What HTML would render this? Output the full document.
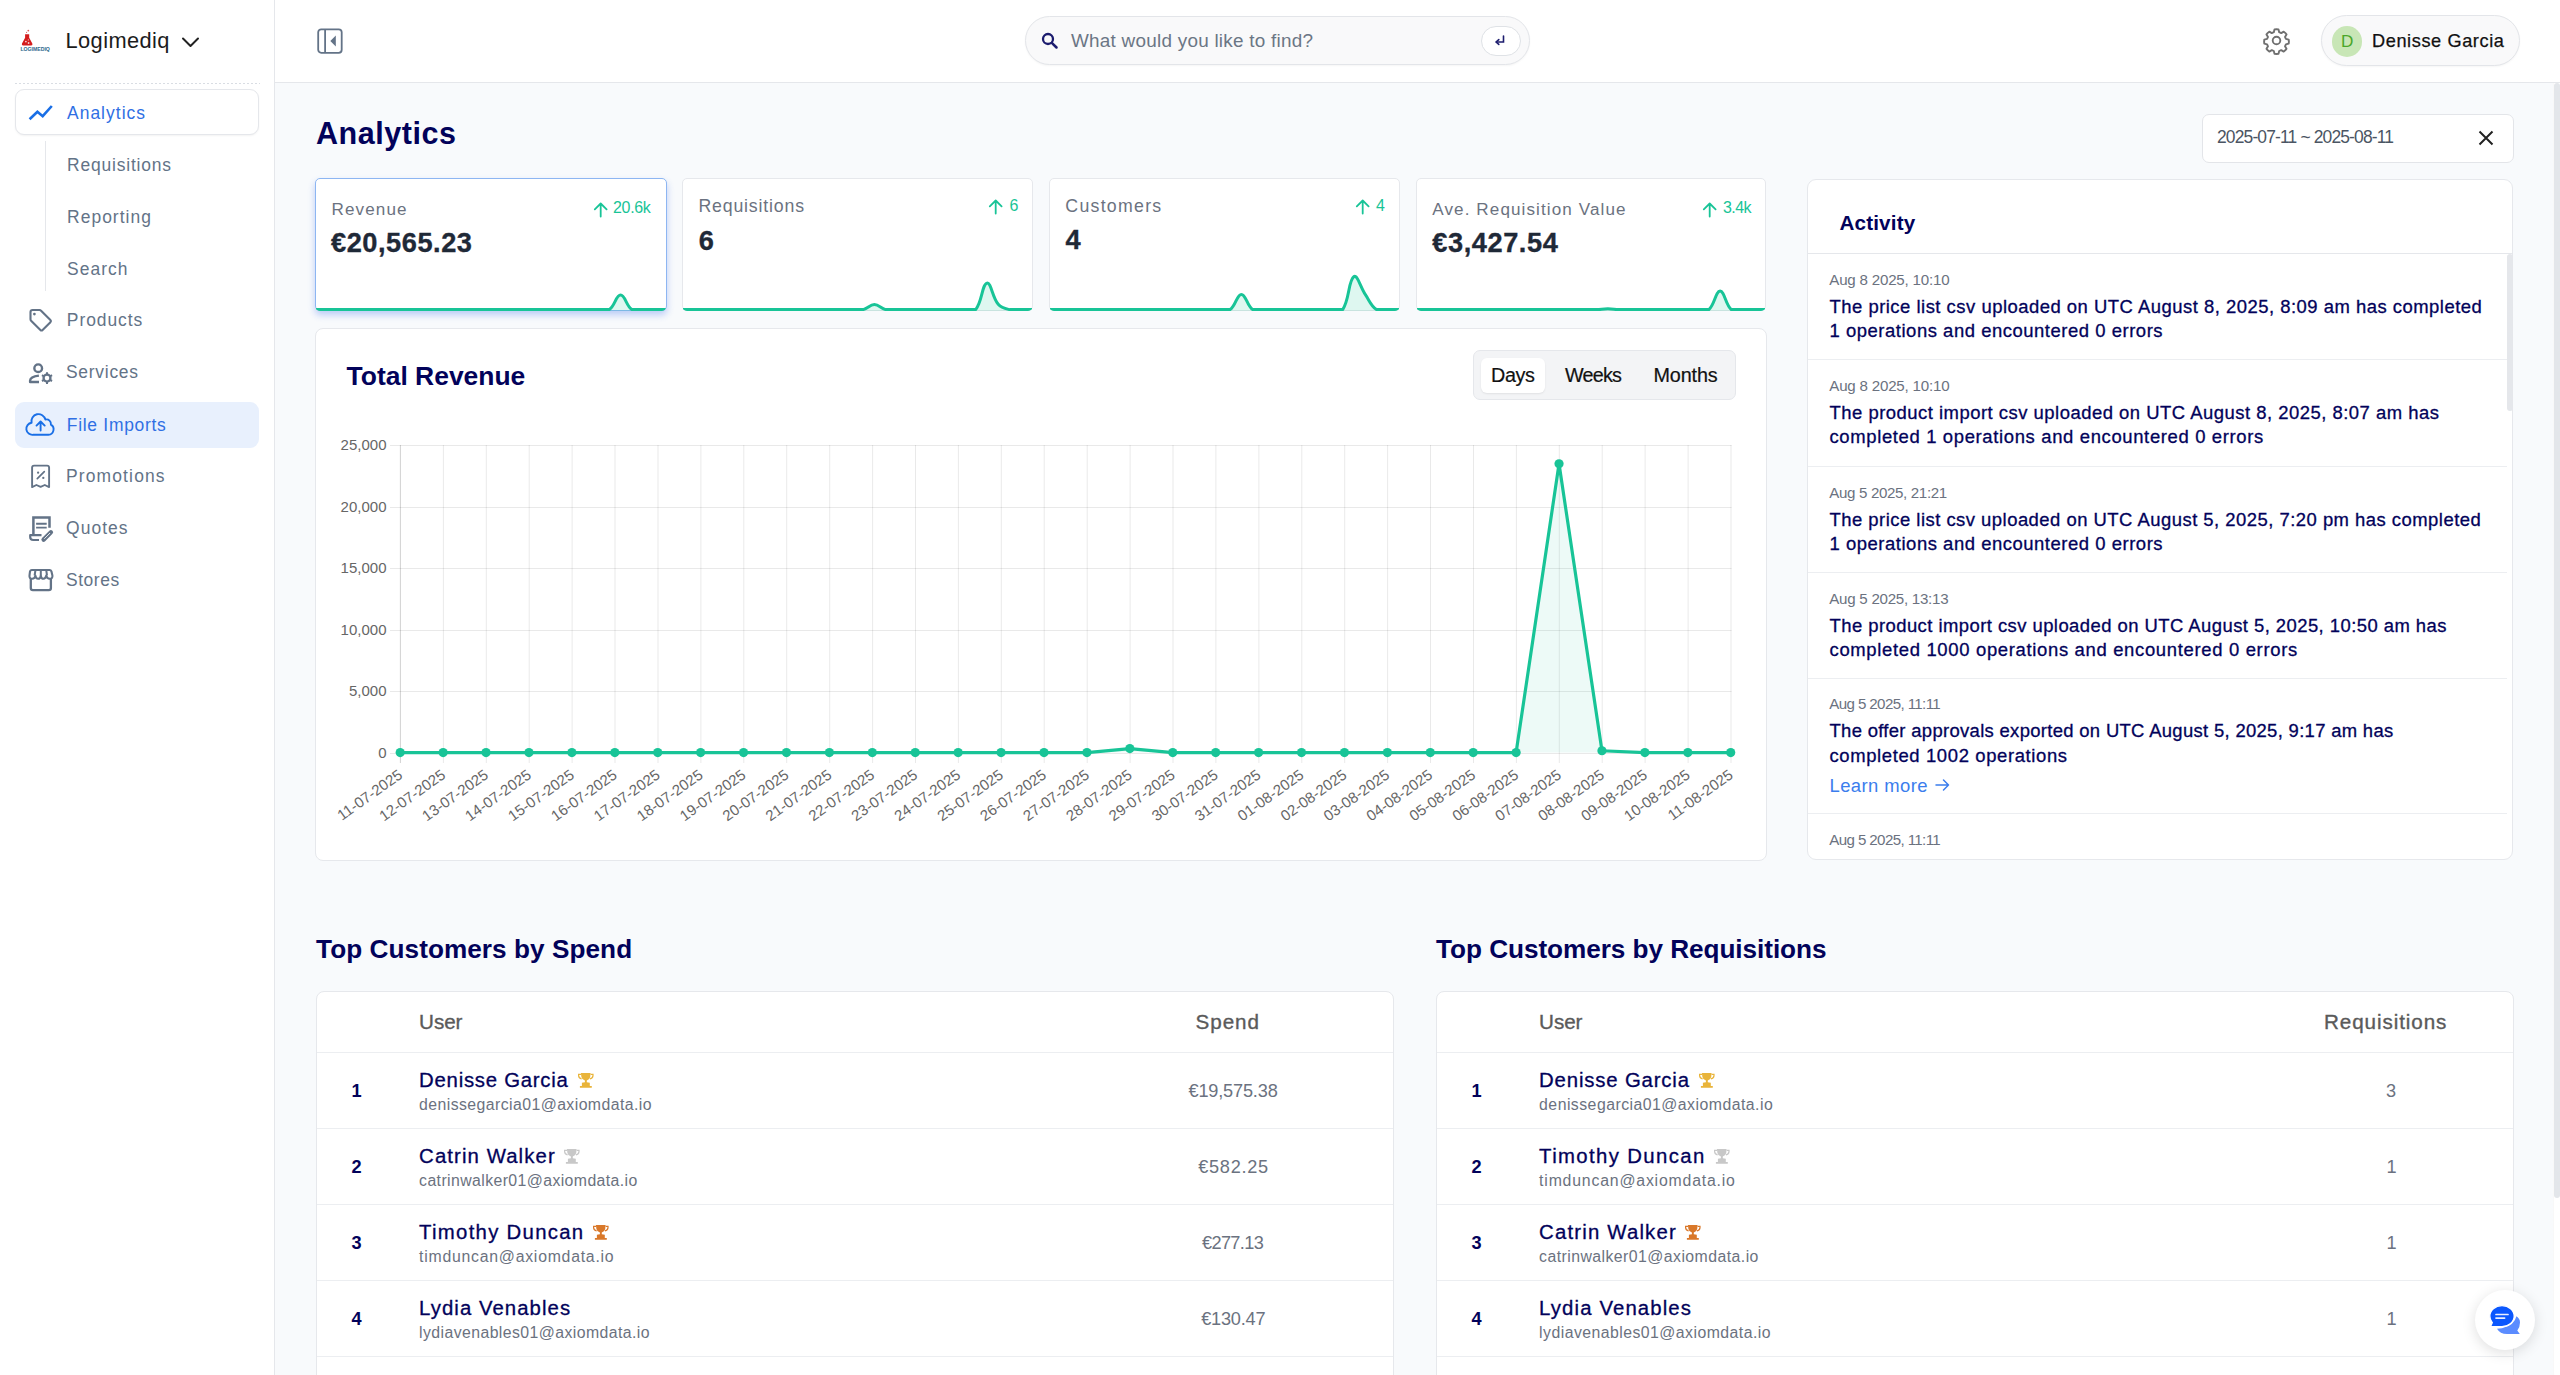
<!DOCTYPE html>
<html><head><meta charset="utf-8"><style>
html,body{margin:0;padding:0;width:2560px;height:1375px;overflow:hidden;background:#f8fafc;font-family:"Liberation Sans",sans-serif}
.t{position:absolute;white-space:nowrap}
svg text{font-family:"Liberation Sans",sans-serif}
</style></head><body>
<div style="position:absolute;left:0.00px;top:0.00px;width:2560.00px;height:1375.00px;background:#f8fafc"></div>
<div style="position:absolute;left:0.00px;top:0.00px;width:274.00px;height:1375.00px;background:#fff"></div>
<div style="position:absolute;left:274.00px;top:0.00px;width:1.00px;height:1375.00px;background:#e5e7eb"></div>
<svg style="position:absolute;left:0.00px;top:0.00px;" width="60" height="60" viewBox="0 0 60 60" fill="none">
<circle cx="28.3" cy="30.6" r="0.9" fill="#e06060"/><circle cx="26.6" cy="32.4" r="0.55" fill="#e06060"/>
<path d="M25.1 34.2 h4.1 v3.6 l3.1 5.6 q0.7 1.9 -1.1 2.1 h-8.1 q-1.8 -0.2 -1.1 -2.1 l3.1 -5.6z" fill="#d41c1c"/>
<circle cx="25.9" cy="41.6" r="0.9" fill="#fff" opacity="0.8"/><circle cx="28.6" cy="43" r="0.9" fill="#fff" opacity="0.8"/><circle cx="28.3" cy="39.9" r="0.6" fill="#fff" opacity="0.7"/>
<text x="20.4" y="50.8" font-family="Liberation Sans" font-weight="700" font-size="5.4" textLength="29.5" lengthAdjust="spacingAndGlyphs" fill="#2b678c">LOGIMEDIQ</text>
</svg>
<div class="t" style="left:65.50px;top:30.49px;font-size:21.80px;line-height:21.80px;letter-spacing:0.426px;color:#1c1c1c;">Logimediq</div>
<svg style="position:absolute;left:181.00px;top:36.00px;" width="19" height="12" viewBox="0 0 19 12" fill="none"><path d="M2 2.5 L9.5 10 L17 2.5" stroke="#222" stroke-width="2" stroke-linecap="round" stroke-linejoin="round"/></svg>
<div style="position:absolute;left:15.00px;top:82.50px;width:245.00px;height:1.00px;background-image:linear-gradient(90deg,#d9dde3 50%,transparent 50%);background-size:4px 1px"></div>
<div style="position:absolute;left:15.00px;top:89.00px;width:244.00px;height:46.00px;background:#fff;border:1px solid #e5e7eb;border-radius:9px;box-sizing:border-box;box-shadow:0 1px 2px rgba(0,0,0,0.05)"></div>
<div class="t" style="left:67.00px;top:105.13px;font-size:17.44px;line-height:17.44px;letter-spacing:1.027px;color:#2f6fe4;">Analytics</div>
<div style="position:absolute;left:45.00px;top:141.00px;width:1.00px;height:150.00px;background:#e5e7eb"></div>
<div class="t" style="left:67.00px;top:157.13px;font-size:17.44px;line-height:17.44px;letter-spacing:0.818px;color:#637387;">Requisitions</div>
<div class="t" style="left:67.00px;top:208.53px;font-size:17.44px;line-height:17.44px;letter-spacing:1.047px;color:#637387;">Reporting</div>
<div class="t" style="left:67.00px;top:260.53px;font-size:17.44px;line-height:17.44px;letter-spacing:1.049px;color:#637387;">Search</div>
<div style="position:absolute;left:15.00px;top:402.00px;width:244.00px;height:46.00px;background:#e8f0fd;border-radius:9px"></div>
<div class="t" style="left:66.80px;top:311.73px;font-size:17.44px;line-height:17.44px;letter-spacing:0.953px;color:#637387;">Products</div>
<div class="t" style="left:66.00px;top:363.93px;font-size:17.44px;line-height:17.44px;letter-spacing:0.730px;color:#637387;">Services</div>
<div class="t" style="left:66.80px;top:416.83px;font-size:17.44px;line-height:17.44px;letter-spacing:0.718px;color:#2f6fe4;">File Imports</div>
<div class="t" style="left:66.00px;top:468.33px;font-size:17.44px;line-height:17.44px;letter-spacing:1.153px;color:#637387;">Promotions</div>
<div class="t" style="left:66.00px;top:520.43px;font-size:17.44px;line-height:17.44px;letter-spacing:1.073px;color:#637387;">Quotes</div>
<div class="t" style="left:66.00px;top:572.23px;font-size:17.44px;line-height:17.44px;letter-spacing:0.559px;color:#637387;">Stores</div>
<svg style="position:absolute;left:0;top:0" width="275" height="620" viewBox="0 0 275 620" fill="none"><path d="M29.6 119.3 L37.4 111.7 L42.7 116.2 L51.8 106" stroke="#1a6fe6" stroke-width="2.6" stroke-linecap="butt" stroke-linejoin="miter"/><path d="M32.6 310 H39.5 q0.9 0 1.6 0.7 L50.4 320 q1.1 1.1 0 2.2 L42.6 330 q-1.1 1.1 -2.2 0 L31.1 320.7 q-0.6 -0.6 -0.6 -1.5 V312.1 q0 -2.1 2.1 -2.1z" stroke="#637387" stroke-width="2.1" stroke-linejoin="round"/><circle cx="34.4" cy="314.1" r="1.35" fill="#637387"/><circle cx="38.2" cy="368.2" r="3.85" stroke="#637387" stroke-width="2.4"/><path d="M38.9 375.6 Q30.4 376.6 30.1 380.5 V382 H39" stroke="#637387" stroke-width="2.4" stroke-linejoin="round"/><path d="M49.30 374.12 L48.00 373.61 L48.03 372.29 L45.97 372.29 L46.00 373.61 L44.70 374.12 L43.61 374.99 L42.49 374.30 L41.45 376.09 L42.61 376.72 L42.40 378.10 L42.61 379.48 L41.45 380.11 L42.49 381.90 L43.61 381.21 L44.70 382.08 L46.00 382.59 L45.97 383.91 L48.03 383.91 L48.00 382.59 L49.30 382.08 L50.39 381.21 L51.51 381.90 L52.55 380.11 L51.39 379.48 L51.60 378.10 L51.39 376.72 L52.55 376.09 L51.51 374.30 L50.39 374.99Z M44.70 378.10 a2.30 2.30 0 1 0 4.60 0 a2.30 2.30 0 1 0 -4.60 0Z" fill="#637387" fill-rule="evenodd"/><path d="M33.2 434.8 H48.4 A5.5 5.5 0 0 0 50.9 424.6 A4.4 4.4 0 0 0 45.4 419.6 A7 7 0 0 0 31.6 422.8 A6 6 0 0 0 33.2 434.8z" stroke="#1a6fe6" stroke-width="1.9" stroke-linejoin="round"/><path d="M40.6 430.6 V421.6 M36.5 425.6 L40.6 421.5 L44.7 425.6" stroke="#1a6fe6" stroke-width="1.9" stroke-linecap="round" stroke-linejoin="round"/><path d="M32.1 487.1 V467.6 q0 -2 2 -2 H47.1 q2 0 2 2 V487.1 L44.8 485 L40.6 486.8 L36.4 485z" stroke="#637387" stroke-width="1.9" stroke-linejoin="round"/><path d="M37.3 478.6 L44.3 471.7" stroke="#637387" stroke-width="1.7" stroke-linecap="round"/><circle cx="38.1" cy="472.7" r="1.15" fill="#637387"/><circle cx="43.3" cy="477.9" r="1.15" fill="#637387"/><path d="M33.4 535 V517.6 H49.5 V527.8" stroke="#637387" stroke-width="2.5"/><path d="M36.1 523.7 H46.7 M36.1 527.6 H46.7" stroke="#637387" stroke-width="1.9"/><path d="M41.5 535.2 H30.2 V537 q0 3 3 3 H39" stroke="#637387" stroke-width="2.2" stroke-linejoin="round"/><path d="M43.6 539.6 L50.9 532.3" stroke="#637387" stroke-width="4.4" stroke-linecap="round"/><path d="M44.6 538.5 L49.8 533.3" stroke="#fff" stroke-width="0.9" stroke-linecap="round"/><path d="M42.2 540.6 V537.5 L45.3 540.6z" fill="#637387"/><path d="M30.8 578 V588 q0 2.1 2.1 2.1 H48.8 q2.1 0 2.1 -2.1 V578" stroke="#637387" stroke-width="2.3"/><path d="M31.8 570 H49.6 q1.3 0 1.8 1.3 L52.4 575.5 q0.4 2.9 -2.6 3.3 q-2.8 0 -3.5 -3.2 q-0.8 3.2 -2.8 3.2 q-2.4 0 -2.7 -3.2 q-0.3 3.2 -2.7 3.2 q-2.2 0 -2.7 -3.2 q-0.6 3.2 -3.3 3.2 q-3 -0.4 -2.6 -3.3 L30 571.3 q0.5 -1.3 1.8 -1.3z" stroke="#637387" stroke-width="2.1" stroke-linejoin="round"/><path d="M35.4 570.5 L34.6 575.5 M40.8 570.5 V575.5 M46.3 570.5 L47 575.5" stroke="#637387" stroke-width="2"/></svg>
<div style="position:absolute;left:275.00px;top:0.00px;width:2285.00px;height:82.00px;background:#fff"></div>
<div style="position:absolute;left:275.00px;top:82.00px;width:2285.00px;height:1.00px;background:#e5e7eb"></div>
<svg style="position:absolute;left:316.00px;top:27.00px;" width="28" height="28" viewBox="0 0 28 28" fill="none"><rect x="2.2" y="2.3" width="23.5" height="23.5" rx="3" stroke="#637387" stroke-width="1.8"/><path d="M9.1 2.5 v23" stroke="#637387" stroke-width="1.8"/><path d="M19.8 8.5 v11 l-5.5 -5.5z" fill="#637387"/></svg>
<div style="position:absolute;left:1025.00px;top:16.00px;width:505.00px;height:49.00px;background:#f9f9fa;border:1px solid #e3e5e9;border-radius:25px;box-sizing:border-box;box-shadow:0 1px 2px rgba(0,0,0,0.04)"></div>
<svg style="position:absolute;left:1040.00px;top:31.00px;" width="20" height="20" viewBox="0 0 20 20" fill="none"><circle cx="8" cy="8" r="5" stroke="#1c1c6e" stroke-width="2.3"/><path d="M11.8 11.8 L16.5 16.5" stroke="#1c1c6e" stroke-width="2.5" stroke-linecap="round"/></svg>
<div class="t" style="left:1071.00px;top:31.70px;font-size:18.90px;line-height:18.90px;letter-spacing:0.249px;color:#6b7685;">What would you like to find?</div>
<div style="position:absolute;left:1481.00px;top:26.00px;width:40.00px;height:30.00px;background:#fff;border:1px solid #dfe2e6;border-radius:15px;box-sizing:border-box"></div>
<svg style="position:absolute;left:1490.00px;top:32.00px;" width="20" height="18" viewBox="0 0 20 18" fill="none"><path d="M13.5 4 v6 h-7" stroke="#1c1c6e" stroke-width="1.6" stroke-linecap="round"/><path d="M8.8 7.6 L6 10 L8.8 12.4" stroke="#1c1c6e" stroke-width="1.6" stroke-linecap="round" stroke-linejoin="round"/></svg>
<svg style="position:absolute;left:2262.00px;top:26.00px;" width="29" height="29" viewBox="0 0 29 29" fill="none"><path d="M14.5 3.2 l2 0.2 l0.7 2.8 l2 0.9 l2.5 -1.5 l1.5 1.3 l1.3 1.5 l-1.5 2.5 l0.9 2 l2.8 0.7 l0.2 2 l-0.2 2 l-2.8 0.7 l-0.9 2 l1.5 2.5 l-1.3 1.5 l-1.5 1.3 l-2.5 -1.5 l-2 0.9 l-0.7 2.8 l-2 0.2 l-2 -0.2 l-0.7 -2.8 l-2 -0.9 l-2.5 1.5 l-1.5 -1.3 l-1.3 -1.5 l1.5 -2.5 l-0.9 -2 l-2.8 -0.7 l-0.2 -2 l0.2 -2 l2.8 -0.7 l0.9 -2 l-1.5 -2.5 l1.3 -1.5 l1.5 -1.3 l2.5 1.5 l2 -0.9 l0.7 -2.8z" stroke="#707070" stroke-width="1.9" stroke-linejoin="round"/><circle cx="14.5" cy="14.5" r="3.8" stroke="#707070" stroke-width="1.9"/></svg>
<div style="position:absolute;left:2321.00px;top:15.00px;width:199.00px;height:51.00px;background:#f9f9fa;border:1px solid #e3e5e9;border-radius:26px;box-sizing:border-box;box-shadow:0 1px 2px rgba(0,0,0,0.04)"></div>
<div style="position:absolute;left:2331.50px;top:26.00px;width:30.50px;height:30.50px;background:#c8e6b6;border-radius:50%"></div>
<div class="t" style="left:2341.00px;top:32.98px;font-size:17.15px;line-height:17.15px;letter-spacing:0.000px;color:#4aa62a;">D</div>
<div class="t" style="left:2372.00px;top:32.32px;font-size:18.17px;line-height:18.17px;letter-spacing:0.599px;color:#111;-webkit-text-stroke:0.25px #111;">Denisse Garcia</div>
<div class="t" style="left:316.00px;top:117.76px;font-size:30.52px;line-height:30.52px;letter-spacing:0.537px;color:#02025a;font-weight:700;">Analytics</div>
<div style="position:absolute;left:2201.50px;top:113.50px;width:312.00px;height:49.00px;background:#fff;border:1px solid #e3e5e9;border-radius:7px;box-sizing:border-box"></div>
<div class="t" style="left:2217.00px;top:129.43px;font-size:17.44px;line-height:17.44px;letter-spacing:-0.851px;color:#4b5563;">2025-07-11 ~ 2025-08-11</div>
<svg style="position:absolute;left:2476.00px;top:128.00px;" width="20" height="20" viewBox="0 0 20 20" fill="none"><path d="M3.5 3.5 L16.5 16.5 M16.5 3.5 L3.5 16.5" stroke="#222" stroke-width="2"/></svg>
<div style="position:absolute;left:315.00px;top:178.00px;width:351.70px;height:133.00px;background:#fff;border:1px solid #8db6f2;border-radius:5px;box-sizing:border-box;box-shadow:0 4px 7px rgba(60,110,235,0.32)"></div>
<div class="t" style="left:331.50px;top:200.99px;font-size:17.08px;line-height:17.08px;letter-spacing:1.106px;color:#6b7280;">Revenue</div>
<svg style="position:absolute;left:592.50px;top:201.00px;" width="16" height="17" viewBox="0 0 16 17" fill="none"><path d="M7.7 15.5 V2.5 M1.8 8.4 L7.7 2.5 L13.6 8.4" stroke="#18c497" stroke-width="1.8" stroke-linecap="round" stroke-linejoin="round"/></svg>
<div class="t" style="left:613.00px;top:200.41px;font-size:15.99px;line-height:15.99px;letter-spacing:-0.310px;color:#18c497;">20.6k</div>
<div class="t" style="left:331.00px;top:228.79px;font-size:27.18px;line-height:27.18px;letter-spacing:0.551px;color:#1f2937;font-weight:700;-webkit-text-stroke:0.35px #1f2937;">€20,565.23</div>
<svg style="position:absolute;left:315.00px;top:178.00px;" width="351.7" height="133" viewBox="0 0 351.7 133" fill="none"><defs><clipPath id="c315"><rect x="0" y="0" width="351.7" height="133" rx="5"/></clipPath></defs><g clip-path="url(#c315)"><path d="M1.00 131.60 C5.51 131.60 7.77 131.60 12.28 131.60 C16.79 131.60 19.05 131.60 23.56 131.60 C28.07 131.60 30.33 131.60 34.84 131.60 C39.35 131.60 41.61 131.60 46.12 131.60 C50.63 131.60 52.89 131.60 57.40 131.60 C61.92 131.60 64.17 131.60 68.68 131.60 C73.20 131.60 75.45 131.60 79.96 131.60 C84.48 131.60 86.73 131.60 91.25 131.60 C95.76 131.60 98.01 131.60 102.53 131.60 C107.04 131.60 109.29 131.60 113.81 131.60 C118.32 131.60 120.57 131.60 125.09 131.60 C129.60 131.60 131.86 131.60 136.37 131.60 C140.88 131.60 143.14 131.60 147.65 131.60 C152.16 131.60 154.42 131.60 158.93 131.60 C163.44 131.60 165.70 131.60 170.21 131.60 C174.72 131.60 176.98 131.60 181.49 131.60 C186.00 131.60 188.26 131.60 192.77 131.60 C197.28 131.60 199.54 131.60 204.05 131.60 C208.56 131.60 210.82 131.60 215.33 131.60 C219.84 131.60 222.10 131.60 226.61 131.60 C231.13 131.60 233.38 131.60 237.89 131.60 C242.41 131.60 244.66 131.60 249.17 131.60 C253.69 131.60 255.94 131.60 260.45 131.60 C264.97 131.60 267.22 131.60 271.74 131.60 C276.25 131.60 278.50 131.60 283.02 131.60 C287.53 131.60 290.86 131.60 294.30 131.60 C299.89 128.01 301.07 117.10 305.58 117.10 C310.09 117.10 311.27 128.01 316.86 131.60 C320.29 131.60 323.63 131.60 328.14 131.60 C332.65 131.60 334.91 131.60 339.42 131.60 C343.93 131.60 346.19 131.60 350.70 131.60 L350.70 140 L1 140 Z" fill="rgba(24,196,151,0.14)"/><path d="M1.00 131.60 C5.51 131.60 7.77 131.60 12.28 131.60 C16.79 131.60 19.05 131.60 23.56 131.60 C28.07 131.60 30.33 131.60 34.84 131.60 C39.35 131.60 41.61 131.60 46.12 131.60 C50.63 131.60 52.89 131.60 57.40 131.60 C61.92 131.60 64.17 131.60 68.68 131.60 C73.20 131.60 75.45 131.60 79.96 131.60 C84.48 131.60 86.73 131.60 91.25 131.60 C95.76 131.60 98.01 131.60 102.53 131.60 C107.04 131.60 109.29 131.60 113.81 131.60 C118.32 131.60 120.57 131.60 125.09 131.60 C129.60 131.60 131.86 131.60 136.37 131.60 C140.88 131.60 143.14 131.60 147.65 131.60 C152.16 131.60 154.42 131.60 158.93 131.60 C163.44 131.60 165.70 131.60 170.21 131.60 C174.72 131.60 176.98 131.60 181.49 131.60 C186.00 131.60 188.26 131.60 192.77 131.60 C197.28 131.60 199.54 131.60 204.05 131.60 C208.56 131.60 210.82 131.60 215.33 131.60 C219.84 131.60 222.10 131.60 226.61 131.60 C231.13 131.60 233.38 131.60 237.89 131.60 C242.41 131.60 244.66 131.60 249.17 131.60 C253.69 131.60 255.94 131.60 260.45 131.60 C264.97 131.60 267.22 131.60 271.74 131.60 C276.25 131.60 278.50 131.60 283.02 131.60 C287.53 131.60 290.86 131.60 294.30 131.60 C299.89 128.01 301.07 117.10 305.58 117.10 C310.09 117.10 311.27 128.01 316.86 131.60 C320.29 131.60 323.63 131.60 328.14 131.60 C332.65 131.60 334.91 131.60 339.42 131.60 C343.93 131.60 346.19 131.60 350.70 131.60" stroke="#18c497" stroke-width="3" stroke-linejoin="round"/></g></svg>
<div style="position:absolute;left:682.40px;top:178.00px;width:351.00px;height:133.00px;background:#fff;border:1px solid #e6e8ec;border-radius:5px;box-sizing:border-box"></div>
<div class="t" style="left:698.40px;top:197.99px;font-size:17.73px;line-height:17.73px;letter-spacing:0.837px;color:#6b7280;">Requisitions</div>
<svg style="position:absolute;left:987.90px;top:198.10px;" width="16" height="17" viewBox="0 0 16 17" fill="none"><path d="M7.7 15.5 V2.5 M1.8 8.4 L7.7 2.5 L13.6 8.4" stroke="#18c497" stroke-width="1.8" stroke-linecap="round" stroke-linejoin="round"/></svg>
<div class="t" style="left:1009.40px;top:197.96px;font-size:15.99px;line-height:15.99px;letter-spacing:0.000px;color:#18c497;">6</div>
<div class="t" style="left:698.70px;top:226.79px;font-size:27.18px;line-height:27.18px;letter-spacing:0.000px;color:#1f2937;font-weight:700;-webkit-text-stroke:0.35px #1f2937;">6</div>
<svg style="position:absolute;left:682.40px;top:178.00px;" width="351" height="133" viewBox="0 0 351 133" fill="none"><defs><clipPath id="c682"><rect x="0" y="0" width="351" height="133" rx="5"/></clipPath></defs><g clip-path="url(#c682)"><path d="M1.00 131.60 C5.50 131.60 7.75 131.60 12.26 131.60 C16.76 131.60 19.01 131.60 23.52 131.60 C28.02 131.60 30.27 131.60 34.77 131.60 C39.28 131.60 41.53 131.60 46.03 131.60 C50.54 131.60 52.79 131.60 57.29 131.60 C61.79 131.60 64.05 131.60 68.55 131.60 C73.05 131.60 75.30 131.60 79.81 131.60 C84.31 131.60 86.56 131.60 91.06 131.60 C95.57 131.60 97.82 131.60 102.32 131.60 C106.83 131.60 109.08 131.60 113.58 131.60 C118.08 131.60 120.34 131.60 124.84 131.60 C129.34 131.60 131.59 131.60 136.10 131.60 C140.60 131.60 142.85 131.60 147.35 131.60 C151.86 131.60 154.11 131.60 158.61 131.60 C163.12 131.60 165.37 131.60 169.87 131.60 C174.37 131.60 176.83 131.60 181.13 131.60 C185.83 130.56 187.88 126.60 192.39 126.60 C196.89 126.60 198.94 130.56 203.65 131.60 C207.95 131.60 210.40 131.60 214.90 131.60 C219.41 131.60 221.66 131.60 226.16 131.60 C230.66 131.60 232.92 131.60 237.42 131.60 C241.92 131.60 244.17 131.60 248.68 131.60 C253.18 131.60 255.43 131.60 259.94 131.60 C264.44 131.60 266.69 131.60 271.19 131.60 C275.70 131.60 277.95 131.60 282.45 131.60 C286.95 131.60 291.18 131.60 293.71 131.60 C300.18 123.98 300.06 106.26 304.97 105.10 C309.06 104.14 310.29 119.32 316.23 126.30 C319.30 129.92 322.76 130.49 327.48 131.60 C331.76 131.60 334.24 131.60 338.74 131.60 C343.25 131.60 345.50 131.60 350.00 131.60 L350.00 140 L1 140 Z" fill="rgba(24,196,151,0.14)"/><path d="M1.00 131.60 C5.50 131.60 7.75 131.60 12.26 131.60 C16.76 131.60 19.01 131.60 23.52 131.60 C28.02 131.60 30.27 131.60 34.77 131.60 C39.28 131.60 41.53 131.60 46.03 131.60 C50.54 131.60 52.79 131.60 57.29 131.60 C61.79 131.60 64.05 131.60 68.55 131.60 C73.05 131.60 75.30 131.60 79.81 131.60 C84.31 131.60 86.56 131.60 91.06 131.60 C95.57 131.60 97.82 131.60 102.32 131.60 C106.83 131.60 109.08 131.60 113.58 131.60 C118.08 131.60 120.34 131.60 124.84 131.60 C129.34 131.60 131.59 131.60 136.10 131.60 C140.60 131.60 142.85 131.60 147.35 131.60 C151.86 131.60 154.11 131.60 158.61 131.60 C163.12 131.60 165.37 131.60 169.87 131.60 C174.37 131.60 176.83 131.60 181.13 131.60 C185.83 130.56 187.88 126.60 192.39 126.60 C196.89 126.60 198.94 130.56 203.65 131.60 C207.95 131.60 210.40 131.60 214.90 131.60 C219.41 131.60 221.66 131.60 226.16 131.60 C230.66 131.60 232.92 131.60 237.42 131.60 C241.92 131.60 244.17 131.60 248.68 131.60 C253.18 131.60 255.43 131.60 259.94 131.60 C264.44 131.60 266.69 131.60 271.19 131.60 C275.70 131.60 277.95 131.60 282.45 131.60 C286.95 131.60 291.18 131.60 293.71 131.60 C300.18 123.98 300.06 106.26 304.97 105.10 C309.06 104.14 310.29 119.32 316.23 126.30 C319.30 129.92 322.76 130.49 327.48 131.60 C331.76 131.60 334.24 131.60 338.74 131.60 C343.25 131.60 345.50 131.60 350.00 131.60" stroke="#18c497" stroke-width="3" stroke-linejoin="round"/></g></svg>
<div style="position:absolute;left:1049.30px;top:178.00px;width:351.00px;height:133.00px;background:#fff;border:1px solid #e6e8ec;border-radius:5px;box-sizing:border-box"></div>
<div class="t" style="left:1065.30px;top:198.09px;font-size:17.73px;line-height:17.73px;letter-spacing:1.283px;color:#6b7280;">Customers</div>
<svg style="position:absolute;left:1355.20px;top:198.20px;" width="16" height="17" viewBox="0 0 16 17" fill="none"><path d="M7.7 15.5 V2.5 M1.8 8.4 L7.7 2.5 L13.6 8.4" stroke="#18c497" stroke-width="1.8" stroke-linecap="round" stroke-linejoin="round"/></svg>
<div class="t" style="left:1375.90px;top:198.06px;font-size:15.99px;line-height:15.99px;letter-spacing:0.000px;color:#18c497;">4</div>
<div class="t" style="left:1065.60px;top:226.49px;font-size:27.18px;line-height:27.18px;letter-spacing:0.000px;color:#1f2937;font-weight:700;-webkit-text-stroke:0.35px #1f2937;">4</div>
<svg style="position:absolute;left:1049.30px;top:178.00px;" width="351" height="133" viewBox="0 0 351 133" fill="none"><defs><clipPath id="c1049"><rect x="0" y="0" width="351" height="133" rx="5"/></clipPath></defs><g clip-path="url(#c1049)"><path d="M1.00 131.60 C5.50 131.60 7.75 131.60 12.26 131.60 C16.76 131.60 19.01 131.60 23.52 131.60 C28.02 131.60 30.27 131.60 34.77 131.60 C39.28 131.60 41.53 131.60 46.03 131.60 C50.54 131.60 52.79 131.60 57.29 131.60 C61.79 131.60 64.05 131.60 68.55 131.60 C73.05 131.60 75.30 131.60 79.81 131.60 C84.31 131.60 86.56 131.60 91.06 131.60 C95.57 131.60 97.82 131.60 102.32 131.60 C106.83 131.60 109.08 131.60 113.58 131.60 C118.08 131.60 120.34 131.60 124.84 131.60 C129.34 131.60 131.59 131.60 136.10 131.60 C140.60 131.60 142.85 131.60 147.35 131.60 C151.86 131.60 154.11 131.60 158.61 131.60 C163.12 131.60 165.37 131.60 169.87 131.60 C174.37 131.60 177.77 131.60 181.13 131.60 C186.78 127.79 187.88 116.40 192.39 116.40 C196.89 116.40 198.00 127.79 203.65 131.60 C207.01 131.60 210.40 131.60 214.90 131.60 C219.41 131.60 221.66 131.60 226.16 131.60 C230.66 131.60 232.92 131.60 237.42 131.60 C241.92 131.60 244.17 131.60 248.68 131.60 C253.18 131.60 255.43 131.60 259.94 131.60 C264.44 131.60 266.69 131.60 271.19 131.60 C275.70 131.60 277.95 131.60 282.45 131.60 C286.95 131.60 291.51 131.60 293.71 131.60 C300.52 121.62 299.35 102.39 304.97 98.60 C308.36 96.31 311.48 109.45 316.23 116.40 C320.49 122.65 321.84 127.79 327.48 131.60 C330.84 131.60 334.24 131.60 338.74 131.60 C343.25 131.60 345.50 131.60 350.00 131.60 L350.00 140 L1 140 Z" fill="rgba(24,196,151,0.14)"/><path d="M1.00 131.60 C5.50 131.60 7.75 131.60 12.26 131.60 C16.76 131.60 19.01 131.60 23.52 131.60 C28.02 131.60 30.27 131.60 34.77 131.60 C39.28 131.60 41.53 131.60 46.03 131.60 C50.54 131.60 52.79 131.60 57.29 131.60 C61.79 131.60 64.05 131.60 68.55 131.60 C73.05 131.60 75.30 131.60 79.81 131.60 C84.31 131.60 86.56 131.60 91.06 131.60 C95.57 131.60 97.82 131.60 102.32 131.60 C106.83 131.60 109.08 131.60 113.58 131.60 C118.08 131.60 120.34 131.60 124.84 131.60 C129.34 131.60 131.59 131.60 136.10 131.60 C140.60 131.60 142.85 131.60 147.35 131.60 C151.86 131.60 154.11 131.60 158.61 131.60 C163.12 131.60 165.37 131.60 169.87 131.60 C174.37 131.60 177.77 131.60 181.13 131.60 C186.78 127.79 187.88 116.40 192.39 116.40 C196.89 116.40 198.00 127.79 203.65 131.60 C207.01 131.60 210.40 131.60 214.90 131.60 C219.41 131.60 221.66 131.60 226.16 131.60 C230.66 131.60 232.92 131.60 237.42 131.60 C241.92 131.60 244.17 131.60 248.68 131.60 C253.18 131.60 255.43 131.60 259.94 131.60 C264.44 131.60 266.69 131.60 271.19 131.60 C275.70 131.60 277.95 131.60 282.45 131.60 C286.95 131.60 291.51 131.60 293.71 131.60 C300.52 121.62 299.35 102.39 304.97 98.60 C308.36 96.31 311.48 109.45 316.23 116.40 C320.49 122.65 321.84 127.79 327.48 131.60 C330.84 131.60 334.24 131.60 338.74 131.60 C343.25 131.60 345.50 131.60 350.00 131.60" stroke="#18c497" stroke-width="3" stroke-linejoin="round"/></g></svg>
<div style="position:absolute;left:1416.30px;top:178.00px;width:350.00px;height:133.00px;background:#fff;border:1px solid #e6e8ec;border-radius:5px;box-sizing:border-box"></div>
<div class="t" style="left:1432.30px;top:200.99px;font-size:17.08px;line-height:17.08px;letter-spacing:1.093px;color:#6b7280;">Ave. Requisition Value</div>
<svg style="position:absolute;left:1701.90px;top:201.00px;" width="16" height="17" viewBox="0 0 16 17" fill="none"><path d="M7.7 15.5 V2.5 M1.8 8.4 L7.7 2.5 L13.6 8.4" stroke="#18c497" stroke-width="1.8" stroke-linecap="round" stroke-linejoin="round"/></svg>
<div class="t" style="left:1723.00px;top:200.41px;font-size:15.99px;line-height:15.99px;letter-spacing:-0.583px;color:#18c497;">3.4k</div>
<div class="t" style="left:1432.30px;top:228.79px;font-size:27.18px;line-height:27.18px;letter-spacing:0.572px;color:#1f2937;font-weight:700;-webkit-text-stroke:0.35px #1f2937;">€3,427.54</div>
<svg style="position:absolute;left:1416.30px;top:178.00px;" width="350" height="133" viewBox="0 0 350 133" fill="none"><defs><clipPath id="c1416"><rect x="0" y="0" width="350" height="133" rx="5"/></clipPath></defs><g clip-path="url(#c1416)"><path d="M1.00 131.60 C5.49 131.60 7.74 131.60 12.23 131.60 C16.72 131.60 18.96 131.60 23.45 131.60 C27.94 131.60 30.19 131.60 34.68 131.60 C39.17 131.60 41.41 131.60 45.90 131.60 C50.39 131.60 52.64 131.60 57.13 131.60 C61.62 131.60 63.86 131.60 68.35 131.60 C72.85 131.60 75.09 131.60 79.58 131.60 C84.07 131.60 86.32 131.60 90.81 131.60 C95.30 131.60 97.54 131.60 102.03 131.60 C106.52 131.60 108.77 131.60 113.26 131.60 C117.75 131.60 119.99 131.60 124.48 131.60 C128.97 131.60 131.22 131.60 135.71 131.60 C140.20 131.60 142.45 131.60 146.94 131.60 C151.43 131.60 153.67 131.60 158.16 131.60 C162.65 131.60 164.90 131.60 169.39 131.60 C173.88 131.60 176.13 131.60 180.61 131.60 C185.11 131.44 187.35 130.80 191.84 130.80 C196.33 130.80 198.57 131.44 203.06 131.60 C207.55 131.60 209.80 131.60 214.29 131.60 C218.78 131.60 221.03 131.60 225.52 131.60 C230.01 131.60 232.25 131.60 236.74 131.60 C241.23 131.60 243.48 131.60 247.97 131.60 C252.46 131.60 254.70 131.60 259.19 131.60 C263.68 131.60 265.93 131.60 270.42 131.60 C274.91 131.60 277.15 131.60 281.65 131.60 C286.14 131.60 289.80 131.60 292.87 131.60 C298.78 126.73 299.61 113.10 304.10 113.10 C308.59 113.10 309.41 126.73 315.32 131.60 C318.39 131.60 322.06 131.60 326.55 131.60 C331.04 131.60 333.28 131.60 337.77 131.60 C342.26 131.60 344.51 131.60 349.00 131.60 L349.00 140 L1 140 Z" fill="rgba(24,196,151,0.14)"/><path d="M1.00 131.60 C5.49 131.60 7.74 131.60 12.23 131.60 C16.72 131.60 18.96 131.60 23.45 131.60 C27.94 131.60 30.19 131.60 34.68 131.60 C39.17 131.60 41.41 131.60 45.90 131.60 C50.39 131.60 52.64 131.60 57.13 131.60 C61.62 131.60 63.86 131.60 68.35 131.60 C72.85 131.60 75.09 131.60 79.58 131.60 C84.07 131.60 86.32 131.60 90.81 131.60 C95.30 131.60 97.54 131.60 102.03 131.60 C106.52 131.60 108.77 131.60 113.26 131.60 C117.75 131.60 119.99 131.60 124.48 131.60 C128.97 131.60 131.22 131.60 135.71 131.60 C140.20 131.60 142.45 131.60 146.94 131.60 C151.43 131.60 153.67 131.60 158.16 131.60 C162.65 131.60 164.90 131.60 169.39 131.60 C173.88 131.60 176.13 131.60 180.61 131.60 C185.11 131.44 187.35 130.80 191.84 130.80 C196.33 130.80 198.57 131.44 203.06 131.60 C207.55 131.60 209.80 131.60 214.29 131.60 C218.78 131.60 221.03 131.60 225.52 131.60 C230.01 131.60 232.25 131.60 236.74 131.60 C241.23 131.60 243.48 131.60 247.97 131.60 C252.46 131.60 254.70 131.60 259.19 131.60 C263.68 131.60 265.93 131.60 270.42 131.60 C274.91 131.60 277.15 131.60 281.65 131.60 C286.14 131.60 289.80 131.60 292.87 131.60 C298.78 126.73 299.61 113.10 304.10 113.10 C308.59 113.10 309.41 126.73 315.32 131.60 C318.39 131.60 322.06 131.60 326.55 131.60 C331.04 131.60 333.28 131.60 337.77 131.60 C342.26 131.60 344.51 131.60 349.00 131.60" stroke="#18c497" stroke-width="3" stroke-linejoin="round"/></g></svg>
<div style="position:absolute;left:315.00px;top:327.50px;width:1451.50px;height:533.00px;background:#fff;border:1px solid #e6e8ec;border-radius:8px;box-sizing:border-box"></div>
<div class="t" style="left:346.60px;top:362.50px;font-size:26.45px;line-height:26.45px;letter-spacing:-0.004px;color:#02025a;font-weight:700;">Total Revenue</div>
<div style="position:absolute;left:1473.40px;top:349.70px;width:263.00px;height:50.60px;background:#f3f4f6;border:1px solid #e5e7eb;border-radius:7px;box-sizing:border-box"></div>
<div style="position:absolute;left:1480.60px;top:358.00px;width:64.20px;height:34.70px;background:#fff;border-radius:6px;box-shadow:0 1px 2px rgba(0,0,0,0.08)"></div>
<div class="t" style="left:1491.00px;top:365.96px;font-size:19.77px;line-height:19.77px;letter-spacing:-0.343px;color:#111;-webkit-text-stroke:0.20px #111;">Days</div>
<div class="t" style="left:1565.00px;top:365.96px;font-size:19.77px;line-height:19.77px;letter-spacing:-0.763px;color:#111;-webkit-text-stroke:0.20px #111;">Weeks</div>
<div class="t" style="left:1653.50px;top:365.96px;font-size:19.77px;line-height:19.77px;letter-spacing:-0.123px;color:#111;-webkit-text-stroke:0.20px #111;">Months</div>
<svg style="position:absolute;left:0;top:0" width="2560" height="1375" viewBox="0 0 2560 1375" fill="none"><path d="M390 753.5 H1731.5" stroke="rgba(0,0,0,0.085)" stroke-width="1"/><path d="M390 691.5 H1731.5" stroke="rgba(0,0,0,0.085)" stroke-width="1"/><path d="M390 630.5 H1731.5" stroke="rgba(0,0,0,0.085)" stroke-width="1"/><path d="M390 568.5 H1731.5" stroke="rgba(0,0,0,0.085)" stroke-width="1"/><path d="M390 507.5 H1731.5" stroke="rgba(0,0,0,0.085)" stroke-width="1"/><path d="M390 445.5 H1731.5" stroke="rgba(0,0,0,0.085)" stroke-width="1"/><path d="M400.4 445 V763" stroke="rgba(0,0,0,0.18)" stroke-width="1"/><path d="M443.4 445 V763" stroke="rgba(0,0,0,0.085)" stroke-width="1"/><path d="M486.3 445 V763" stroke="rgba(0,0,0,0.085)" stroke-width="1"/><path d="M529.2 445 V763" stroke="rgba(0,0,0,0.085)" stroke-width="1"/><path d="M572.1 445 V763" stroke="rgba(0,0,0,0.085)" stroke-width="1"/><path d="M615.0 445 V763" stroke="rgba(0,0,0,0.085)" stroke-width="1"/><path d="M658.0 445 V763" stroke="rgba(0,0,0,0.085)" stroke-width="1"/><path d="M700.9 445 V763" stroke="rgba(0,0,0,0.085)" stroke-width="1"/><path d="M743.8 445 V763" stroke="rgba(0,0,0,0.085)" stroke-width="1"/><path d="M786.7 445 V763" stroke="rgba(0,0,0,0.085)" stroke-width="1"/><path d="M829.7 445 V763" stroke="rgba(0,0,0,0.085)" stroke-width="1"/><path d="M872.6 445 V763" stroke="rgba(0,0,0,0.085)" stroke-width="1"/><path d="M915.5 445 V763" stroke="rgba(0,0,0,0.085)" stroke-width="1"/><path d="M958.4 445 V763" stroke="rgba(0,0,0,0.085)" stroke-width="1"/><path d="M1001.3 445 V763" stroke="rgba(0,0,0,0.085)" stroke-width="1"/><path d="M1044.2 445 V763" stroke="rgba(0,0,0,0.085)" stroke-width="1"/><path d="M1087.2 445 V763" stroke="rgba(0,0,0,0.085)" stroke-width="1"/><path d="M1130.1 445 V763" stroke="rgba(0,0,0,0.085)" stroke-width="1"/><path d="M1173.0 445 V763" stroke="rgba(0,0,0,0.085)" stroke-width="1"/><path d="M1215.9 445 V763" stroke="rgba(0,0,0,0.085)" stroke-width="1"/><path d="M1258.9 445 V763" stroke="rgba(0,0,0,0.085)" stroke-width="1"/><path d="M1301.8 445 V763" stroke="rgba(0,0,0,0.085)" stroke-width="1"/><path d="M1344.7 445 V763" stroke="rgba(0,0,0,0.085)" stroke-width="1"/><path d="M1387.6 445 V763" stroke="rgba(0,0,0,0.085)" stroke-width="1"/><path d="M1430.5 445 V763" stroke="rgba(0,0,0,0.085)" stroke-width="1"/><path d="M1473.5 445 V763" stroke="rgba(0,0,0,0.085)" stroke-width="1"/><path d="M1516.4 445 V763" stroke="rgba(0,0,0,0.085)" stroke-width="1"/><path d="M1559.3 445 V763" stroke="rgba(0,0,0,0.085)" stroke-width="1"/><path d="M1602.2 445 V763" stroke="rgba(0,0,0,0.085)" stroke-width="1"/><path d="M1645.1 445 V763" stroke="rgba(0,0,0,0.085)" stroke-width="1"/><path d="M1688.1 445 V763" stroke="rgba(0,0,0,0.085)" stroke-width="1"/><path d="M1731.0 445 V763" stroke="rgba(0,0,0,0.085)" stroke-width="1"/><text x="386.5" y="757.8" text-anchor="end" font-family="Liberation Sans" font-size="15" fill="#666">0</text><text x="386.5" y="696.3" text-anchor="end" font-family="Liberation Sans" font-size="15" fill="#666">5,000</text><text x="386.5" y="634.8" text-anchor="end" font-family="Liberation Sans" font-size="15" fill="#666">10,000</text><text x="386.5" y="573.3" text-anchor="end" font-family="Liberation Sans" font-size="15" fill="#666">15,000</text><text x="386.5" y="511.8" text-anchor="end" font-family="Liberation Sans" font-size="15" fill="#666">20,000</text><text x="386.5" y="450.3" text-anchor="end" font-family="Liberation Sans" font-size="15" fill="#666">25,000</text><text transform="translate(400.60 773) rotate(-35.5)" text-anchor="end" font-family="Liberation Sans" font-size="15" fill="#666" dy="5">11-07-2025</text><text transform="translate(443.52 773) rotate(-35.5)" text-anchor="end" font-family="Liberation Sans" font-size="15" fill="#666" dy="5">12-07-2025</text><text transform="translate(486.44 773) rotate(-35.5)" text-anchor="end" font-family="Liberation Sans" font-size="15" fill="#666" dy="5">13-07-2025</text><text transform="translate(529.36 773) rotate(-35.5)" text-anchor="end" font-family="Liberation Sans" font-size="15" fill="#666" dy="5">14-07-2025</text><text transform="translate(572.28 773) rotate(-35.5)" text-anchor="end" font-family="Liberation Sans" font-size="15" fill="#666" dy="5">15-07-2025</text><text transform="translate(615.20 773) rotate(-35.5)" text-anchor="end" font-family="Liberation Sans" font-size="15" fill="#666" dy="5">16-07-2025</text><text transform="translate(658.12 773) rotate(-35.5)" text-anchor="end" font-family="Liberation Sans" font-size="15" fill="#666" dy="5">17-07-2025</text><text transform="translate(701.04 773) rotate(-35.5)" text-anchor="end" font-family="Liberation Sans" font-size="15" fill="#666" dy="5">18-07-2025</text><text transform="translate(743.96 773) rotate(-35.5)" text-anchor="end" font-family="Liberation Sans" font-size="15" fill="#666" dy="5">19-07-2025</text><text transform="translate(786.88 773) rotate(-35.5)" text-anchor="end" font-family="Liberation Sans" font-size="15" fill="#666" dy="5">20-07-2025</text><text transform="translate(829.80 773) rotate(-35.5)" text-anchor="end" font-family="Liberation Sans" font-size="15" fill="#666" dy="5">21-07-2025</text><text transform="translate(872.72 773) rotate(-35.5)" text-anchor="end" font-family="Liberation Sans" font-size="15" fill="#666" dy="5">22-07-2025</text><text transform="translate(915.64 773) rotate(-35.5)" text-anchor="end" font-family="Liberation Sans" font-size="15" fill="#666" dy="5">23-07-2025</text><text transform="translate(958.56 773) rotate(-35.5)" text-anchor="end" font-family="Liberation Sans" font-size="15" fill="#666" dy="5">24-07-2025</text><text transform="translate(1001.48 773) rotate(-35.5)" text-anchor="end" font-family="Liberation Sans" font-size="15" fill="#666" dy="5">25-07-2025</text><text transform="translate(1044.40 773) rotate(-35.5)" text-anchor="end" font-family="Liberation Sans" font-size="15" fill="#666" dy="5">26-07-2025</text><text transform="translate(1087.32 773) rotate(-35.5)" text-anchor="end" font-family="Liberation Sans" font-size="15" fill="#666" dy="5">27-07-2025</text><text transform="translate(1130.24 773) rotate(-35.5)" text-anchor="end" font-family="Liberation Sans" font-size="15" fill="#666" dy="5">28-07-2025</text><text transform="translate(1173.16 773) rotate(-35.5)" text-anchor="end" font-family="Liberation Sans" font-size="15" fill="#666" dy="5">29-07-2025</text><text transform="translate(1216.08 773) rotate(-35.5)" text-anchor="end" font-family="Liberation Sans" font-size="15" fill="#666" dy="5">30-07-2025</text><text transform="translate(1259.00 773) rotate(-35.5)" text-anchor="end" font-family="Liberation Sans" font-size="15" fill="#666" dy="5">31-07-2025</text><text transform="translate(1301.92 773) rotate(-35.5)" text-anchor="end" font-family="Liberation Sans" font-size="15" fill="#666" dy="5">01-08-2025</text><text transform="translate(1344.84 773) rotate(-35.5)" text-anchor="end" font-family="Liberation Sans" font-size="15" fill="#666" dy="5">02-08-2025</text><text transform="translate(1387.76 773) rotate(-35.5)" text-anchor="end" font-family="Liberation Sans" font-size="15" fill="#666" dy="5">03-08-2025</text><text transform="translate(1430.68 773) rotate(-35.5)" text-anchor="end" font-family="Liberation Sans" font-size="15" fill="#666" dy="5">04-08-2025</text><text transform="translate(1473.60 773) rotate(-35.5)" text-anchor="end" font-family="Liberation Sans" font-size="15" fill="#666" dy="5">05-08-2025</text><text transform="translate(1516.52 773) rotate(-35.5)" text-anchor="end" font-family="Liberation Sans" font-size="15" fill="#666" dy="5">06-08-2025</text><text transform="translate(1559.44 773) rotate(-35.5)" text-anchor="end" font-family="Liberation Sans" font-size="15" fill="#666" dy="5">07-08-2025</text><text transform="translate(1602.36 773) rotate(-35.5)" text-anchor="end" font-family="Liberation Sans" font-size="15" fill="#666" dy="5">08-08-2025</text><text transform="translate(1645.28 773) rotate(-35.5)" text-anchor="end" font-family="Liberation Sans" font-size="15" fill="#666" dy="5">09-08-2025</text><text transform="translate(1688.20 773) rotate(-35.5)" text-anchor="end" font-family="Liberation Sans" font-size="15" fill="#666" dy="5">10-08-2025</text><text transform="translate(1731.12 773) rotate(-35.5)" text-anchor="end" font-family="Liberation Sans" font-size="15" fill="#666" dy="5">11-08-2025</text><polygon points="400.20,752.60 443.12,752.60 486.04,752.60 528.96,752.60 571.88,752.60 614.80,752.60 657.72,752.60 700.64,752.60 743.56,752.60 786.48,752.60 829.40,752.60 872.32,752.60 915.24,752.60 958.16,752.60 1001.08,752.60 1044.00,752.60 1086.92,752.60 1129.84,748.54 1172.76,752.60 1215.68,752.60 1258.60,752.60 1301.52,752.60 1344.44,752.60 1387.36,752.60 1430.28,752.60 1473.20,752.60 1516.12,752.60 1559.04,463.80 1601.96,750.75 1644.88,752.60 1687.80,752.60 1730.72,752.60 1730.72,752.60 400.20,752.60" fill="rgba(24,196,151,0.08)"/><polyline points="400.20,752.60 443.12,752.60 486.04,752.60 528.96,752.60 571.88,752.60 614.80,752.60 657.72,752.60 700.64,752.60 743.56,752.60 786.48,752.60 829.40,752.60 872.32,752.60 915.24,752.60 958.16,752.60 1001.08,752.60 1044.00,752.60 1086.92,752.60 1129.84,748.54 1172.76,752.60 1215.68,752.60 1258.60,752.60 1301.52,752.60 1344.44,752.60 1387.36,752.60 1430.28,752.60 1473.20,752.60 1516.12,752.60 1559.04,463.80 1601.96,750.75 1644.88,752.60 1687.80,752.60 1730.72,752.60" stroke="#18c497" stroke-width="3.2" stroke-linejoin="round" fill="none"/><circle cx="400.20" cy="752.60" r="4.6" fill="#18c497"/><circle cx="443.12" cy="752.60" r="4.6" fill="#18c497"/><circle cx="486.04" cy="752.60" r="4.6" fill="#18c497"/><circle cx="528.96" cy="752.60" r="4.6" fill="#18c497"/><circle cx="571.88" cy="752.60" r="4.6" fill="#18c497"/><circle cx="614.80" cy="752.60" r="4.6" fill="#18c497"/><circle cx="657.72" cy="752.60" r="4.6" fill="#18c497"/><circle cx="700.64" cy="752.60" r="4.6" fill="#18c497"/><circle cx="743.56" cy="752.60" r="4.6" fill="#18c497"/><circle cx="786.48" cy="752.60" r="4.6" fill="#18c497"/><circle cx="829.40" cy="752.60" r="4.6" fill="#18c497"/><circle cx="872.32" cy="752.60" r="4.6" fill="#18c497"/><circle cx="915.24" cy="752.60" r="4.6" fill="#18c497"/><circle cx="958.16" cy="752.60" r="4.6" fill="#18c497"/><circle cx="1001.08" cy="752.60" r="4.6" fill="#18c497"/><circle cx="1044.00" cy="752.60" r="4.6" fill="#18c497"/><circle cx="1086.92" cy="752.60" r="4.6" fill="#18c497"/><circle cx="1129.84" cy="748.54" r="4.6" fill="#18c497"/><circle cx="1172.76" cy="752.60" r="4.6" fill="#18c497"/><circle cx="1215.68" cy="752.60" r="4.6" fill="#18c497"/><circle cx="1258.60" cy="752.60" r="4.6" fill="#18c497"/><circle cx="1301.52" cy="752.60" r="4.6" fill="#18c497"/><circle cx="1344.44" cy="752.60" r="4.6" fill="#18c497"/><circle cx="1387.36" cy="752.60" r="4.6" fill="#18c497"/><circle cx="1430.28" cy="752.60" r="4.6" fill="#18c497"/><circle cx="1473.20" cy="752.60" r="4.6" fill="#18c497"/><circle cx="1516.12" cy="752.60" r="4.6" fill="#18c497"/><circle cx="1559.04" cy="463.80" r="4.6" fill="#18c497"/><circle cx="1601.96" cy="750.75" r="4.6" fill="#18c497"/><circle cx="1644.88" cy="752.60" r="4.6" fill="#18c497"/><circle cx="1687.80" cy="752.60" r="4.6" fill="#18c497"/><circle cx="1730.72" cy="752.60" r="4.6" fill="#18c497"/></svg>
<div style="position:absolute;left:1807.40px;top:179.00px;width:706.00px;height:681.00px;background:#fff;border:1px solid #e6e8ec;border-radius:9px;box-sizing:border-box"></div>
<div class="t" style="left:1839.50px;top:213.32px;font-size:20.64px;line-height:20.64px;letter-spacing:0.164px;color:#02025a;font-weight:700;">Activity</div>
<div style="position:absolute;left:1808.00px;top:253.00px;width:705.00px;height:1.00px;background:#e5e7eb"></div>
<div class="t" style="left:1829.30px;top:272.10px;font-size:15.12px;line-height:15.12px;letter-spacing:-0.204px;color:#6b7280;">Aug 8 2025, 10:10</div>
<div class="t" style="left:1829.50px;top:297.77px;font-size:18.46px;line-height:18.46px;letter-spacing:0.498px;color:#02025a;-webkit-text-stroke:0.30px #02025a;">The price list csv uploaded on UTC August 8, 2025, 8:09 am has completed</div>
<div class="t" style="left:1829.50px;top:322.47px;font-size:18.46px;line-height:18.46px;letter-spacing:0.539px;color:#02025a;-webkit-text-stroke:0.30px #02025a;">1 operations and encountered 0 errors</div>
<div style="position:absolute;left:1808.00px;top:359.40px;width:699.00px;height:1.00px;background:#eceef1"></div>
<div class="t" style="left:1829.30px;top:378.10px;font-size:15.12px;line-height:15.12px;letter-spacing:-0.204px;color:#6b7280;">Aug 8 2025, 10:10</div>
<div class="t" style="left:1829.50px;top:403.77px;font-size:18.46px;line-height:18.46px;letter-spacing:0.498px;color:#02025a;-webkit-text-stroke:0.30px #02025a;">The product import csv uploaded on UTC August 8, 2025, 8:07 am has</div>
<div class="t" style="left:1829.50px;top:428.47px;font-size:18.46px;line-height:18.46px;letter-spacing:0.650px;color:#02025a;-webkit-text-stroke:0.30px #02025a;">completed 1 operations and encountered 0 errors</div>
<div style="position:absolute;left:1808.00px;top:466.30px;width:699.00px;height:1.00px;background:#eceef1"></div>
<div class="t" style="left:1829.30px;top:485.00px;font-size:15.12px;line-height:15.12px;letter-spacing:-0.348px;color:#6b7280;">Aug 5 2025, 21:21</div>
<div class="t" style="left:1829.50px;top:510.67px;font-size:18.46px;line-height:18.46px;letter-spacing:0.483px;color:#02025a;-webkit-text-stroke:0.30px #02025a;">The price list csv uploaded on UTC August 5, 2025, 7:20 pm has completed</div>
<div class="t" style="left:1829.50px;top:535.37px;font-size:18.46px;line-height:18.46px;letter-spacing:0.539px;color:#02025a;-webkit-text-stroke:0.30px #02025a;">1 operations and encountered 0 errors</div>
<div style="position:absolute;left:1808.00px;top:572.20px;width:699.00px;height:1.00px;background:#eceef1"></div>
<div class="t" style="left:1829.30px;top:590.90px;font-size:15.12px;line-height:15.12px;letter-spacing:-0.266px;color:#6b7280;">Aug 5 2025, 13:13</div>
<div class="t" style="left:1829.50px;top:616.57px;font-size:18.46px;line-height:18.46px;letter-spacing:0.449px;color:#02025a;-webkit-text-stroke:0.30px #02025a;">The product import csv uploaded on UTC August 5, 2025, 10:50 am has</div>
<div class="t" style="left:1829.50px;top:641.27px;font-size:18.46px;line-height:18.46px;letter-spacing:0.675px;color:#02025a;-webkit-text-stroke:0.30px #02025a;">completed 1000 operations and encountered 0 errors</div>
<div style="position:absolute;left:1808.00px;top:677.60px;width:699.00px;height:1.00px;background:#eceef1"></div>
<div class="t" style="left:1829.30px;top:696.30px;font-size:15.12px;line-height:15.12px;letter-spacing:-0.613px;color:#6b7280;">Aug 5 2025, 11:11</div>
<div class="t" style="left:1829.50px;top:721.97px;font-size:18.46px;line-height:18.46px;letter-spacing:0.320px;color:#02025a;-webkit-text-stroke:0.30px #02025a;">The offer approvals exported on UTC August 5, 2025, 9:17 am has</div>
<div class="t" style="left:1829.50px;top:746.67px;font-size:18.46px;line-height:18.46px;letter-spacing:0.629px;color:#02025a;-webkit-text-stroke:0.30px #02025a;">completed 1002 operations</div>
<div class="t" style="left:1829.50px;top:776.67px;font-size:18.46px;line-height:18.46px;letter-spacing:0.422px;color:#3b7ded;">Learn more</div>
<svg style="position:absolute;left:1933.00px;top:775.60px;" width="20" height="18" viewBox="0 0 20 18" fill="none"><path d="M3 9 H15.5 M10.5 4 L15.5 9 L10.5 14" stroke="#3b7ded" stroke-width="1.5" stroke-linecap="round" stroke-linejoin="round"/></svg>
<div style="position:absolute;left:1808.00px;top:813.20px;width:699.00px;height:1.00px;background:#eceef1"></div>
<div class="t" style="left:1829.30px;top:831.90px;font-size:15.12px;line-height:15.12px;letter-spacing:-0.613px;color:#6b7280;">Aug 5 2025, 11:11</div>
<div style="position:absolute;left:2507.00px;top:254.00px;width:6.00px;height:157.00px;background:#e5e7eb;border-radius:3px"></div>
<div class="t" style="left:316.10px;top:936.05px;font-size:26.16px;line-height:26.16px;letter-spacing:0.055px;color:#02025a;font-weight:700;">Top Customers by Spend</div>
<div style="position:absolute;left:315.50px;top:991.00px;width:1078.50px;height:400.00px;background:#fff;border:1px solid #e6e8ec;border-radius:8px;box-sizing:border-box"></div>
<div class="t" style="left:419.10px;top:1011.52px;font-size:20.64px;line-height:20.64px;letter-spacing:-0.057px;color:#5a5a5a;-webkit-text-stroke:0.35px #5a5a5a;">User</div>
<div class="t" style="left:1195.60px;top:1011.62px;font-size:20.64px;line-height:20.64px;letter-spacing:0.928px;color:#5a5a5a;-webkit-text-stroke:0.35px #5a5a5a;">Spend</div>
<div style="position:absolute;left:316.50px;top:1052.00px;width:1076.50px;height:1.00px;background:#eceef1"></div>
<div class="t" style="left:351.50px;top:1082.02px;font-size:18.17px;line-height:18.17px;letter-spacing:0.000px;color:#02025a;font-weight:700;">1</div>
<div class="t" style="left:419.10px;top:1070.27px;font-size:20.35px;line-height:20.35px;letter-spacing:0.744px;color:#02025a;-webkit-text-stroke:0.30px #02025a;">Denisse Garcia</div>
<svg style="position:absolute;left:576.50px;top:1072.00px;" width="17" height="17" viewBox="0 0 17 17" fill="none"><path d="M3.9 1 H13.6 L13.2 5 Q12.8 7.6 9.8 8.5 V10.3 L12.8 10.8 V14 H14.8 V15.8 H2.9 V14 H4.9 V10.8 L7.9 10.3 V8.5 Q4.9 7.6 4.4 5z" fill="#e9b43a"/><path d="M4 2.3 H1.6 V3.6 Q1.8 6.3 4.6 6.8 M13.6 2.3 H16 V3.6 Q15.8 6.3 13 6.8" stroke="#e9b43a" stroke-width="1.2" fill="none"/></svg>
<div class="t" style="left:419.10px;top:1096.99px;font-size:15.84px;line-height:15.84px;letter-spacing:0.419px;color:#6b7280;">denissegarcia01@axiomdata.io</div>
<div class="t" style="left:1188.50px;top:1082.02px;font-size:18.17px;line-height:18.17px;letter-spacing:-0.182px;color:#6b7280;">€19,575.38</div>
<div style="position:absolute;left:316.50px;top:1128.00px;width:1076.50px;height:1.00px;background:#eceef1"></div>
<div class="t" style="left:351.50px;top:1158.02px;font-size:18.17px;line-height:18.17px;letter-spacing:0.000px;color:#02025a;font-weight:700;">2</div>
<div class="t" style="left:419.10px;top:1146.27px;font-size:20.35px;line-height:20.35px;letter-spacing:1.092px;color:#02025a;-webkit-text-stroke:0.30px #02025a;">Catrin Walker</div>
<svg style="position:absolute;left:563.30px;top:1148.00px;" width="17" height="17" viewBox="0 0 17 17" fill="none"><path d="M3.9 1 H13.6 L13.2 5 Q12.8 7.6 9.8 8.5 V10.3 L12.8 10.8 V14 H14.8 V15.8 H2.9 V14 H4.9 V10.8 L7.9 10.3 V8.5 Q4.9 7.6 4.4 5z" fill="#c8c8c8"/><path d="M4 2.3 H1.6 V3.6 Q1.8 6.3 4.6 6.8 M13.6 2.3 H16 V3.6 Q15.8 6.3 13 6.8" stroke="#c8c8c8" stroke-width="1.2" fill="none"/></svg>
<div class="t" style="left:419.10px;top:1172.99px;font-size:15.84px;line-height:15.84px;letter-spacing:0.398px;color:#6b7280;">catrinwalker01@axiomdata.io</div>
<div class="t" style="left:1198.20px;top:1158.02px;font-size:18.17px;line-height:18.17px;letter-spacing:0.720px;color:#6b7280;">€582.25</div>
<div style="position:absolute;left:316.50px;top:1204.00px;width:1076.50px;height:1.00px;background:#eceef1"></div>
<div class="t" style="left:351.50px;top:1234.02px;font-size:18.17px;line-height:18.17px;letter-spacing:0.000px;color:#02025a;font-weight:700;">3</div>
<div class="t" style="left:419.10px;top:1222.27px;font-size:20.35px;line-height:20.35px;letter-spacing:1.284px;color:#02025a;-webkit-text-stroke:0.30px #02025a;">Timothy Duncan</div>
<svg style="position:absolute;left:591.80px;top:1224.00px;" width="17" height="17" viewBox="0 0 17 17" fill="none"><path d="M3.9 1 H13.6 L13.2 5 Q12.8 7.6 9.8 8.5 V10.3 L12.8 10.8 V14 H14.8 V15.8 H2.9 V14 H4.9 V10.8 L7.9 10.3 V8.5 Q4.9 7.6 4.4 5z" fill="#d9782a"/><path d="M4 2.3 H1.6 V3.6 Q1.8 6.3 4.6 6.8 M13.6 2.3 H16 V3.6 Q15.8 6.3 13 6.8" stroke="#d9782a" stroke-width="1.2" fill="none"/></svg>
<div class="t" style="left:419.10px;top:1248.99px;font-size:15.84px;line-height:15.84px;letter-spacing:0.747px;color:#6b7280;">timduncan@axiomdata.io</div>
<div class="t" style="left:1202.00px;top:1234.02px;font-size:18.17px;line-height:18.17px;letter-spacing:-0.647px;color:#6b7280;">€277.13</div>
<div style="position:absolute;left:316.50px;top:1280.00px;width:1076.50px;height:1.00px;background:#eceef1"></div>
<div class="t" style="left:351.50px;top:1310.02px;font-size:18.17px;line-height:18.17px;letter-spacing:0.000px;color:#02025a;font-weight:700;">4</div>
<div class="t" style="left:419.10px;top:1298.27px;font-size:20.35px;line-height:20.35px;letter-spacing:1.056px;color:#02025a;-webkit-text-stroke:0.30px #02025a;">Lydia Venables</div>
<div class="t" style="left:419.10px;top:1324.99px;font-size:15.84px;line-height:15.84px;letter-spacing:0.410px;color:#6b7280;">lydiavenables01@axiomdata.io</div>
<div class="t" style="left:1201.20px;top:1310.02px;font-size:18.17px;line-height:18.17px;letter-spacing:-0.213px;color:#6b7280;">€130.47</div>
<div style="position:absolute;left:316.50px;top:1356.00px;width:1076.50px;height:1.00px;background:#eceef1"></div>
<div class="t" style="left:1436.10px;top:936.05px;font-size:26.16px;line-height:26.16px;letter-spacing:-0.053px;color:#02025a;font-weight:700;">Top Customers by Requisitions</div>
<div style="position:absolute;left:1435.50px;top:991.00px;width:1078.00px;height:400.00px;background:#fff;border:1px solid #e6e8ec;border-radius:8px;box-sizing:border-box"></div>
<div class="t" style="left:1539.10px;top:1011.52px;font-size:20.64px;line-height:20.64px;letter-spacing:-0.057px;color:#5a5a5a;-webkit-text-stroke:0.35px #5a5a5a;">User</div>
<div class="t" style="left:2324.00px;top:1011.62px;font-size:20.64px;line-height:20.64px;letter-spacing:0.916px;color:#5a5a5a;-webkit-text-stroke:0.35px #5a5a5a;">Requisitions</div>
<div style="position:absolute;left:1436.50px;top:1052.00px;width:1076.00px;height:1.00px;background:#eceef1"></div>
<div class="t" style="left:1471.50px;top:1082.02px;font-size:18.17px;line-height:18.17px;letter-spacing:0.000px;color:#02025a;font-weight:700;">1</div>
<div class="t" style="left:1539.10px;top:1070.27px;font-size:20.35px;line-height:20.35px;letter-spacing:0.837px;color:#02025a;-webkit-text-stroke:0.30px #02025a;">Denisse Garcia</div>
<svg style="position:absolute;left:1697.70px;top:1072.00px;" width="17" height="17" viewBox="0 0 17 17" fill="none"><path d="M3.9 1 H13.6 L13.2 5 Q12.8 7.6 9.8 8.5 V10.3 L12.8 10.8 V14 H14.8 V15.8 H2.9 V14 H4.9 V10.8 L7.9 10.3 V8.5 Q4.9 7.6 4.4 5z" fill="#e9b43a"/><path d="M4 2.3 H1.6 V3.6 Q1.8 6.3 4.6 6.8 M13.6 2.3 H16 V3.6 Q15.8 6.3 13 6.8" stroke="#e9b43a" stroke-width="1.2" fill="none"/></svg>
<div class="t" style="left:1539.10px;top:1096.99px;font-size:15.84px;line-height:15.84px;letter-spacing:0.463px;color:#6b7280;">denissegarcia01@axiomdata.io</div>
<div class="t" style="left:2386.00px;top:1082.02px;font-size:18.17px;line-height:18.17px;letter-spacing:0.000px;color:#6b7280;">3</div>
<div style="position:absolute;left:1436.50px;top:1128.00px;width:1076.00px;height:1.00px;background:#eceef1"></div>
<div class="t" style="left:1471.50px;top:1158.02px;font-size:18.17px;line-height:18.17px;letter-spacing:0.000px;color:#02025a;font-weight:700;">2</div>
<div class="t" style="left:1539.10px;top:1146.27px;font-size:20.35px;line-height:20.35px;letter-spacing:1.369px;color:#02025a;-webkit-text-stroke:0.30px #02025a;">Timothy Duncan</div>
<svg style="position:absolute;left:1712.90px;top:1148.00px;" width="17" height="17" viewBox="0 0 17 17" fill="none"><path d="M3.9 1 H13.6 L13.2 5 Q12.8 7.6 9.8 8.5 V10.3 L12.8 10.8 V14 H14.8 V15.8 H2.9 V14 H4.9 V10.8 L7.9 10.3 V8.5 Q4.9 7.6 4.4 5z" fill="#c8c8c8"/><path d="M4 2.3 H1.6 V3.6 Q1.8 6.3 4.6 6.8 M13.6 2.3 H16 V3.6 Q15.8 6.3 13 6.8" stroke="#c8c8c8" stroke-width="1.2" fill="none"/></svg>
<div class="t" style="left:1539.10px;top:1172.99px;font-size:15.84px;line-height:15.84px;letter-spacing:0.809px;color:#6b7280;">timduncan@axiomdata.io</div>
<div class="t" style="left:2386.50px;top:1158.02px;font-size:18.17px;line-height:18.17px;letter-spacing:0.000px;color:#6b7280;">1</div>
<div style="position:absolute;left:1436.50px;top:1204.00px;width:1076.00px;height:1.00px;background:#eceef1"></div>
<div class="t" style="left:1471.50px;top:1234.02px;font-size:18.17px;line-height:18.17px;letter-spacing:0.000px;color:#02025a;font-weight:700;">3</div>
<div class="t" style="left:1539.10px;top:1222.27px;font-size:20.35px;line-height:20.35px;letter-spacing:1.183px;color:#02025a;-webkit-text-stroke:0.30px #02025a;">Catrin Walker</div>
<svg style="position:absolute;left:1684.40px;top:1224.00px;" width="17" height="17" viewBox="0 0 17 17" fill="none"><path d="M3.9 1 H13.6 L13.2 5 Q12.8 7.6 9.8 8.5 V10.3 L12.8 10.8 V14 H14.8 V15.8 H2.9 V14 H4.9 V10.8 L7.9 10.3 V8.5 Q4.9 7.6 4.4 5z" fill="#d9782a"/><path d="M4 2.3 H1.6 V3.6 Q1.8 6.3 4.6 6.8 M13.6 2.3 H16 V3.6 Q15.8 6.3 13 6.8" stroke="#d9782a" stroke-width="1.2" fill="none"/></svg>
<div class="t" style="left:1539.10px;top:1248.99px;font-size:15.84px;line-height:15.84px;letter-spacing:0.440px;color:#6b7280;">catrinwalker01@axiomdata.io</div>
<div class="t" style="left:2386.50px;top:1234.02px;font-size:18.17px;line-height:18.17px;letter-spacing:0.000px;color:#6b7280;">1</div>
<div style="position:absolute;left:1436.50px;top:1280.00px;width:1076.00px;height:1.00px;background:#eceef1"></div>
<div class="t" style="left:1471.50px;top:1310.02px;font-size:18.17px;line-height:18.17px;letter-spacing:0.000px;color:#02025a;font-weight:700;">4</div>
<div class="t" style="left:1539.10px;top:1298.27px;font-size:20.35px;line-height:20.35px;letter-spacing:1.125px;color:#02025a;-webkit-text-stroke:0.30px #02025a;">Lydia Venables</div>
<div class="t" style="left:1539.10px;top:1324.99px;font-size:15.84px;line-height:15.84px;letter-spacing:0.447px;color:#6b7280;">lydiavenables01@axiomdata.io</div>
<div class="t" style="left:2386.50px;top:1310.02px;font-size:18.17px;line-height:18.17px;letter-spacing:0.000px;color:#6b7280;">1</div>
<div style="position:absolute;left:1436.50px;top:1356.00px;width:1076.00px;height:1.00px;background:#eceef1"></div>
<div style="position:absolute;left:2475.00px;top:1290.00px;width:60.00px;height:60.00px;background:#fff;border-radius:50%;box-shadow:0 3px 14px rgba(0,0,0,0.13)"></div>
<svg style="position:absolute;left:0;top:0" width="2560" height="1375" viewBox="0 0 2560 1375" fill="none"><path d="M2497 1328.8 Q2500 1334 2507 1334.1 H2519.8 L2517.3 1330.6 Q2520 1327 2520 1322.5 Q2520 1318.5 2516.4 1316.3 Q2514.5 1325.5 2502 1328.2z" fill="#5b8cff"/><path d="M2502 1305.6 C2508.8 1305.6 2514.2 1310.3 2514.2 1316.1 C2514.2 1321.9 2508.8 1326.6 2502 1326.6 H2490.6 L2492.3 1322.6 C2490.6 1320.8 2489.8 1318.6 2489.8 1316.1 C2489.8 1310.3 2495.2 1305.6 2502 1305.6z" fill="#0b57fe" stroke="#fff" stroke-width="1.3"/><path d="M2496 1314.5 H2508 M2496 1318.1 H2504.6" stroke="#e8eeff" stroke-width="1.7" stroke-linecap="round"/></svg>
<div style="position:absolute;left:2553.00px;top:83.00px;width:7.00px;height:1292.00px;background:#fff;box-shadow:inset 1px 0 1px rgba(0,0,0,0.03)"></div>
<div style="position:absolute;left:2554.00px;top:83.00px;width:6.00px;height:1115.00px;background:#e3e6ea;border-radius:3px"></div>
</body></html>
